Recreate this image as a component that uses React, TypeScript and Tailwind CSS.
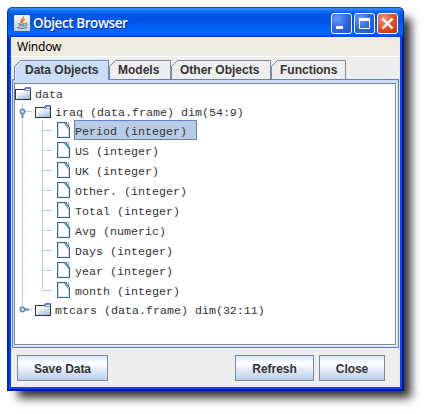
import React from 'react';

function FolderIcon() {
  return (
    <svg width="17" height="14" viewBox="0 0 17 14" shapeRendering="crispEdges" className="shrink-0">
      <defs>
        <linearGradient id="folder" x1="0.2" y1="0" x2="0.8" y2="1">
          <stop offset="0.2" stopColor="#ffffff" />
          <stop offset="1" stopColor="#9dbbe0" />
        </linearGradient>
      </defs>
      <rect x="1" y="3" width="14" height="9" fill="url(#folder)" />
      <path d="M0.5 12.5V2.5H10M0 12.5H15.5V2" stroke="#333333" fill="none" />
      <path d="M9 3V1h1V0h6v2H11v1z" fill="#6382bf" />
      <path d="M9 3.5h6" stroke="#8fa8d8" />
      <path d="M1.5 12V3.5H9" stroke="#ffffff" fill="none" />
    </svg>
  );
}

function FileIcon() {
  return (
    <svg width="13" height="16" viewBox="0 0 13 16" className="shrink-0">
      <path d="M0.5 0.5H8L12.5 5.5V15.5H0.5Z" fill="#dbe8f6" stroke="#33669a" strokeWidth="1.1" />
      <path d="M2 2H7L11 7V14H2Z" fill="#ffffff" />
      <path d="M7.5 1.5L12 7" stroke="#33669a" strokeDasharray="1.4 0.6" fill="none" />
      <path d="M9 0.5h2.5v4" stroke="#33669a" strokeDasharray="1 0.8" fill="none" />
    </svg>
  );
}

function Handle({ open }: { open: boolean }) {
  return (
    <svg width="20" height="18" viewBox="0 0 20 18" className="shrink-0">
      <path d={open ? 'M7.5 0V18M8 8.5H17' : 'M7.5 0V7M8 8.5H17'} stroke="#b8cfe5" fill="none" />
      <path d={open ? 'M7.5 10V15' : 'M9 8.5H14'} stroke="#6382bf" strokeWidth="2" />
      <circle cx="7.5" cy="8.5" r="2.1" fill="#ffffff" stroke="#6382bf" strokeWidth="1.7" />
    </svg>
  );
}

function Leaf({ label, selected, last }: { label: string; selected?: boolean; last?: boolean }) {
  return (
    <div className="flex h-5 items-center">
      <svg width="42" height="20" viewBox="0 0 42 20" className="shrink-0">
        <path d={last ? 'M7.5 0V21M27.5 0V10.5H37' : 'M7.5 0V20M27.5 0V20M27.5 10.5H37'} stroke="#b8c8e8" fill="none" />
      </svg>
      <FileIcon />
      <span
        className={
          'ml-1 h-5 whitespace-pre border pt-[2px] pr-[9px] leading-[18px] ' +
          (selected ? 'border-[#6382bf] bg-[#b8cce5]' : 'border-transparent')
        }
      >
        {label}
      </span>
    </div>
  );
}

function Branch({ label, open }: { label: string; open: boolean }) {
  return (
    <div className={'flex items-start ' + (open ? 'h-[17px]' : 'h-[18px] pt-px')}>
      <Handle open={open} />
      <span className="pt-[2px]">
        <FolderIcon />
      </span>
      <span className="ml-[3px] whitespace-pre pt-px leading-[18px]">{label}</span>
    </div>
  );
}

function Tab({ label, width, textX, active }: { label: string; width: number; textX: number; active?: boolean }) {
  return (
    <div className="relative h-[19px]" style={{ width }}>
      <svg width={width + 1} height="20" className="absolute top-0 left-0">
        <path
          d={`M0.5 ${active ? 20 : 19}V6.5L6.5 0.5H${width - 0.5}V${active ? 20 : 19}`}
          fill={active ? '#cbdcf6' : '#eeeeee'}
          stroke={active ? '#6382bf' : '#7a8a99'}
        />
        {active && <path d="M1.5 20V7L7 1.5H93" stroke="#e2edf9" fill="none" />}
      </svg>
      <span className="relative block whitespace-nowrap leading-[21px]" style={{ paddingLeft: textX }}>
        {label}
      </span>
    </div>
  );
}

function Button({ label, className }: { label: string; className: string }) {
  return (
    <button
      className={
        'flex h-[26px] items-center justify-center border border-[#7a8a99] bg-[linear-gradient(180deg,#dde6f6_0%,#ffffff_32%,#f4f7fd_42%,#b9cde9_100%)] pt-[2px] tracking-[-0.05px] ' +
        className
      }
    >
      {label}
    </button>
  );
}

function JavaIcon() {
  return (
    <svg width="16" height="16" viewBox="0 0 16 16" className="mt-[2px] shrink-0">
      <defs>
        <linearGradient id="java" x1="0" y1="0" x2="0" y2="1">
          <stop offset="0" stopColor="#f4f4f4" />
          <stop offset="1" stopColor="#cccccc" />
        </linearGradient>
      </defs>
      <rect width="16" height="16" rx="1" fill="url(#java)" />
      <path d="M9.5 1.5C10 4 5 4.5 7.5 8M11 4C8.5 5 8 6 9 8" stroke="#e0702f" strokeWidth="1.3" fill="none" />
      <path d="M4 8.7Q7 10 11 8.8M5 10.7Q8 11.5 10.5 10.7M3 12.5Q7 14.5 13 12.6M11.5 8.5C14 8 13.5 10.5 11 11" stroke="#46698d" fill="none" />
    </svg>
  );
}

const controlClass = 'block h-[21px] w-[21px] rounded-[3px] border border-white ';

function TitleBar() {
  return (
    <div className="flex h-[30px] items-center rounded-t-[6px] bg-[linear-gradient(180deg,#0038bd_0%,#3d92ff_6%,#1272f5_12%,#0057e5_25%,#0054e3_45%,#005df2_62%,#0069ff_85%,#005df5_92%,#003fd0_100%)] pr-[6px] pl-[7px] shadow-[inset_1px_0_0_#0030c8,inset_-1px_0_0_#0020a8]">
      <JavaIcon />
      <span className="ml-[3px] flex-1 whitespace-nowrap pt-[3px] font-['Open_Sans','Noto_Sans',sans-serif] text-[13.5px] font-semibold tracking-[-0.42px] text-white [text-shadow:1px_1px_0_#00309a]">
        Object Browser
      </span>
      <div className="flex gap-[2px] pt-[3px]">
        <span className={controlClass + 'bg-[radial-gradient(circle_at_30%_25%,#6b9cff,#2b62e6_55%,#1c4fce)]'}>
          <svg width="19" height="19"><path d="M4 13.5h7" stroke="#ffffff" strokeWidth="3" /></svg>
        </span>
        <span className={controlClass + 'bg-[radial-gradient(circle_at_30%_25%,#6b9cff,#2b62e6_55%,#1c4fce)]'}>
          <svg width="19" height="19"><path d="M4.5 4v10.5h10V4" stroke="#ffffff" fill="none" /><path d="M4 5.5h11" stroke="#ffffff" strokeWidth="3" /></svg>
        </span>
        <span className={controlClass + 'bg-[radial-gradient(circle_at_30%_25%,#f09878,#de4a24_55%,#c03508)]'}>
          <svg width="19" height="19"><path d="M4.5 4.5l10 10M14.5 4.5L4.5 14.5" stroke="#ffffff" strokeWidth="2.4" /></svg>
        </span>
      </div>
    </div>
  );
}

const variables = [
  'Period (integer)',
  'US (integer)',
  'UK (integer)',
  'Other. (integer)',
  'Total (integer)',
  'Avg (numeric)',
  'Days (integer)',
  'year (integer)',
  'month (integer)',
];

export default function App() {
  return (
    <div className="h-[414px] w-[427px] overflow-hidden bg-white pt-[7px] pl-[7px] font-['Liberation_Sans',Arial,sans-serif] text-[12px] font-bold text-[#333333]">
      <div className="flex h-[384px] w-[397px] flex-col rounded-t-[6px] bg-[#0048f0] shadow-[9px_9px_10px_-2px_rgba(0,0,0,0.8)]">
        <TitleBar />
        <div className="flex flex-1 flex-col px-1 pb-1 shadow-[inset_2px_0_0_#0022cc,inset_-2px_-2px_0_#0014a0]">
          <div className="flex flex-1 flex-col bg-[#eeeeee]">
            <div className="flex h-5 items-center border-b border-white bg-[#efebde] pl-[6px] font-['Noto_Sans',sans-serif] text-[12px] font-normal tracking-[-0.2px] text-black">
              Window
            </div>
            <div className="flex pt-[3px] pl-[3px]">
              <Tab label="Data Objects" width={95} textX={11} active />
              <Tab label="Models" width={62} textX={9} />
              <Tab label="Other Objects" width={100} textX={9} />
              <Tab label="Functions" width={75} textX={9} />
            </div>
            <div className="ml-px h-[269px] w-[387px] border border-[#6382bf] bg-[#cbdcf6] pt-[3px] pl-px">
              <div className="h-[262px] w-[382px] border border-[#7a8a99] bg-white pt-px font-['Liberation_Mono','Courier_New',monospace] text-[11.67px] font-normal shadow-[1px_1px_0_#ffffff]">
                <div className="flex h-[18px] items-start">
                  <span className="pt-[2px]">
                    <FolderIcon />
                  </span>
                  <span className="ml-[3px] pt-px leading-[18px]">data</span>
                </div>
                <Branch label="iraq (data.frame) dim(54:9)" open />
                {variables.map((label, i) => (
                  <Leaf key={label} label={label} selected={i === 0} last={i === variables.length - 1} />
                ))}
                <Branch label="mtcars (data.frame) dim(32:11)" open={false} />
              </div>
            </div>
            <div className="flex pt-[7px] pl-[6px]">
              <Button label="Save Data" className="w-[91px]" />
              <Button label="Refresh" className="ml-[127px] w-[79px]" />
              <Button label="Close" className="ml-[5px] w-[66px]" />
            </div>
          </div>
        </div>
      </div>
    </div>
  );
}
